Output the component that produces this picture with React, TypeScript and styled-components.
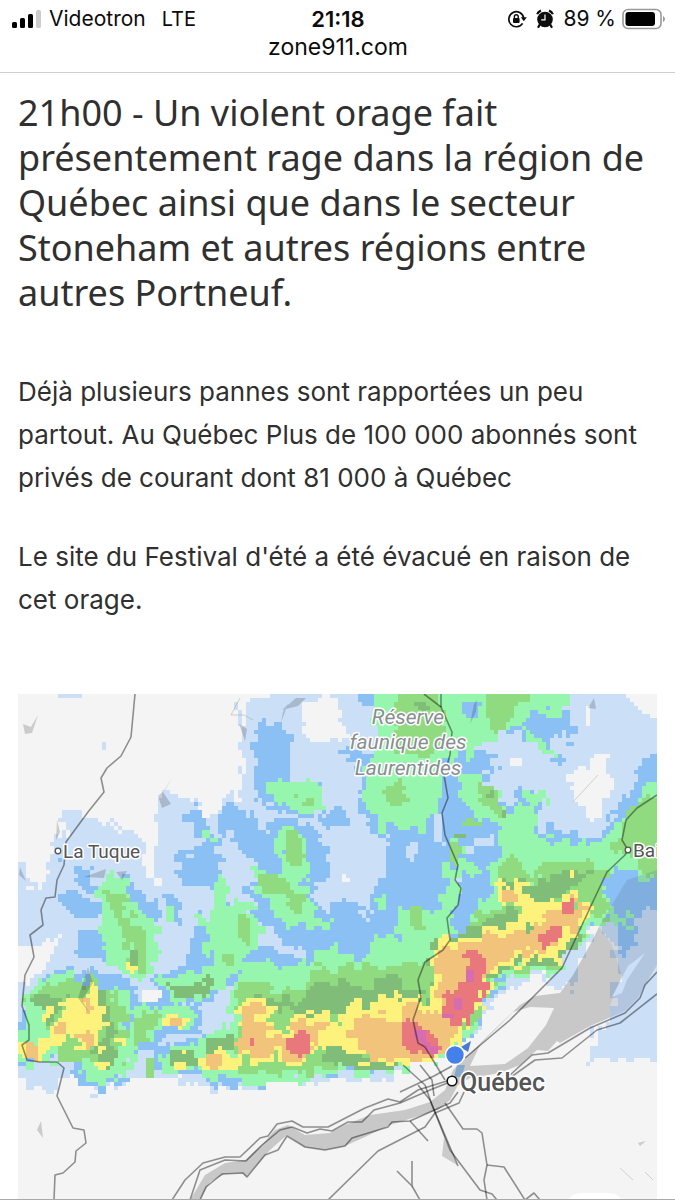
import React from "react";
import styled, { createGlobalStyle } from "styled-components";

const GlobalStyle = createGlobalStyle`
  *, *::before, *::after { box-sizing: border-box; }
  body { margin: 0; background: #fff; color: #303030; }
`;

const Page = styled.div`
  height: 100vh;
  display: flex;
  flex-direction: column;
  overflow: hidden;
  border-bottom: 1px solid #a9a9a9;
`;

const BrowserBar = styled.header`
  flex: none;
  padding: 6px 10px 9px 11px;
  border-bottom: 1px solid #cfcfcf;
  color: #0c0c0c;
  font-family: Inter, sans-serif;
`;

const StatusRow = styled.div`
  display: grid;
  grid-template-columns: 1fr auto 1fr;
  align-items: center;
  font-size: 21px;
  line-height: 26px;
`;

const StatusGroup = styled.div<{ $end?: boolean }>`
  display: flex;
  align-items: center;
  gap: ${(p) => (p.$end ? 6 : 8)}px;
  justify-content: ${(p) => (p.$end ? "flex-end" : "flex-start")};
  white-space: nowrap;
`;

const Network = styled.span`
  margin-left: 8px;
  font-size: 20px;
`;

const AlarmSlot = styled.span`
  display: flex;
  margin: 0 3px;
`;

const Clock = styled.time`
  font-size: 22px;
  font-weight: 600;
`;

const Address = styled.div`
  text-align: center;
  font-size: 23px;
  line-height: 31px;
`;

const Article = styled.main`
  flex: 1;
  min-height: 0;
  padding: 17px 18px 0;
`;

const Headline = styled.h1`
  margin: 0 0 55px;
  font: 400 36px/45px "Noto Sans", sans-serif;
`;

const Paragraph = styled.p`
  margin: 0 0 36px;
  font: 400 26px/43px Inter, sans-serif;
  white-space: nowrap;
`;

const MapFigure = styled.figure`
  margin: 73px 0 0;
  svg { display: block; width: 100%; height: auto; }
`;

const MapLabel = styled.text<{ $area?: boolean; $large?: boolean }>`
  font-family: Roboto, sans-serif;
  font-size: ${(p) => (p.$large ? 25 : p.$area ? 21 : 19)}px;
  font-style: ${(p) => (p.$area ? "italic" : "normal")};
  font-weight: ${(p) => (p.$large ? 500 : 400)};
  text-anchor: ${(p) => (p.$area ? "middle" : "start")};
  fill: ${(p) => (p.$area ? "#888e90" : "#555")};
  stroke: #fff;
  stroke-width: 3px;
  stroke-linejoin: round;
  paint-order: stroke;
`;

const SignalIcon = () => (
  <svg width="30" height="20" viewBox="0 0 30 20" aria-label="Signal">
    <rect x="1" y="13" width="5" height="6" rx="1.5" />
    <rect x="9" y="9" width="5" height="10" rx="1.5" />
    <rect x="17" y="5" width="5" height="14" rx="1.5" />
    <rect x="25" y="1" width="5" height="18" rx="1.5" fill="#cdcdcd" />
  </svg>
);

const RotationLockIcon = () => (
  <svg width="20" height="20" viewBox="0 0 20 20" fill="none" stroke="#0c0c0c" strokeWidth="1.7">
    <path d="M15.6 14.4a7.5 7.5 0 1 1 1.1-5.6" />
    <path d="M13.8 8.3h6l-3 4z" fill="#0c0c0c" stroke="none" />
    <rect x="6" y="9" width="6.6" height="5" rx="1" fill="#0c0c0c" stroke="none" />
    <path d="M7.4 9V7.6a1.9 1.9 0 0 1 3.8 0V9" strokeWidth="1.4" />
  </svg>
);

const AlarmIcon = () => (
  <svg width="18" height="20" viewBox="0 0 18 20">
    <circle cx="9" cy="10.5" r="7.8" fill="#0c0c0c" />
    <path d="M1.2 5.2 Q2 2.6 5 1.6M16.8 5.2Q16 2.6 13 1.6M3.8 15.5 2 18.7M14.2 15.5l1.8 3.2" fill="none" stroke="#0c0c0c" strokeWidth="2.2" />
    <path d="M9 5.5v5.3H5.2" fill="none" stroke="#fff" strokeWidth="1.2" />
  </svg>
);

const BatteryIcon = () => (
  <svg width="43" height="22" viewBox="0 0 43 22" aria-label="Batterie">
    <rect x="1" y="1.5" width="38" height="19" rx="5" fill="#fff" stroke="#999" strokeWidth="1.6" />
    <rect x="3.5" y="4" width="29.5" height="14" rx="3" fill="#000" />
    <path d="M41 8q2 1 2 3t-2 3z" fill="#999" />
  </svg>
);

type Point = [number, number];

const COLORS = {
  none: "#f4f4f4",
  light: "#cbdff7",
  blue: "#8bc0f4",
  green: "#97f6ae",
  leaf: "#90db80",
  moss: "#80bd78",
  yellow: "#fdf27c",
  orange: "#f2c47b",
  red: "#e8787c",
  pink: "#d76db0",
};
type Level = keyof typeof COLORS;

/* Rain intensity areas, weakest first; later areas cover earlier ones. */
const AREAS: [Level, string][] = [
  ["light", "18,865 35,890 50,872 52,850 64,835 65,815 98,812 120,822 135,838 142,848 145,872 150,883 160,883 157,850 158,800 165,793 180,800 195,808 213,820 218,803 238,795 243,780 240,694 657,694 657,1068 640,1062 610,1055 590,1062 595,1035 610,1008 622,975 612,945 598,925 585,950 573,985 560,995 545,985 548,972 530,978 505,990 490,1005 480,1020 470,1040 440,1058 410,1070 375,1082 320,1082 270,1083 240,1092 205,1088 170,1078 130,1078 108,1095 95,1092 75,1070 55,1092 18,1080"],
  ["light", "60,694 84,694 84,698 60,698"],
  ["light", "102,742 106,742 106,749 102,749"],
  ["none", "300,706 318,704 318,698 340,698 342,720 346,735 335,742 310,743 302,725"],
  ["none", "586,752 605,752 605,770 617,782 608,800 600,818 588,818 575,804 570,790 572,770 586,768"],
  ["none", "625,694 657,694 657,720 645,715"],
  ["none", "584,704 590,704 590,725 586,725"],
  ["none", "18,950 40,945 62,935 55,945 45,965 30,985 18,978"],
  ["none", "241,694 280,694 250,700 240,710"],
  ["none", "511,758 521,758 521,765 511,765"],
  ["none", "140,992 160,990 160,1005 142,1000"],
  ["none", "341,876 350,876 350,883 341,883"],
  ["none", "90,812 110,818 122,832 118,834 102,823"],
  ["blue", "262,722 285,722 289,740 286,760 290,778 312,778 326,800 320,815 300,815 265,806 255,790 253,765 256,745"],
  ["blue", "222,806 245,806 258,820 270,835 268,815 290,818 310,826 327,840 330,870 320,882 308,887 318,905 330,910 333,904 345,900 358,906 366,920 368,916 372,905 382,870 392,850 386,838 370,832 362,815 358,790 358,760 340,755 345,750 375,750 440,750 460,755 480,755 500,765 495,775 485,778 498,800 520,805 522,785 540,788 545,810 535,825 550,830 575,833 590,838 605,830 610,812 625,800 635,775 645,758 657,755 657,940 600,930 520,960 480,1010 470,1040 450,1055 410,1068 330,1078 240,1085 222,1088 200,1075 220,1060 230,1010 235,980 250,955 240,940 262,905 240,885 262,890 270,880 250,860 235,845 222,830"],
  ["blue", "318,818 330,812 345,808 350,824 330,828 318,822"],
  ["blue", "188,808 203,815 217,828 220,845 222,880 234,902 215,905 208,890 190,880 172,858 172,852 195,855 200,840 188,828"],
  ["blue", "222,806 238,804 240,828 222,826"],
  ["blue", "65,865 80,868 92,875 98,885 130,880 148,895 160,905 162,925 140,920 110,905 95,895 82,885"],
  ["blue", "60,895 75,893 100,903 102,918 88,918 72,915 62,905"],
  ["blue", "80,930 105,930 108,962 75,955"],
  ["blue", "160,893 180,895 182,925 165,925 168,905"],
  ["blue", "200,910 185,965 215,960 218,945"],
  ["blue", "45,972 70,968 115,978 132,988 140,1010 138,1050 125,1080 110,1092 85,1085 72,1068 78,1055 50,1062 18,1066 18,1030 26,1005"],
  ["blue", "152,975 190,962 225,955 250,965 245,1000 200,1005 165,1005"],
  ["blue", "125,1003 160,1000 200,1008 200,1030 165,1035 150,1050 130,1050"],
  ["blue", "155,1050 200,1035 240,1030 240,1092 200,1078 155,1070"],
  ["blue", "358,694 386,694 386,704 360,706"],
  ["light", "258,924 268,926 284,940 308,955 300,960 270,948 258,948"],
  ["light", "222,990 234,985 232,1010 210,1025 200,1018"],
  ["light", "405,845 418,840 415,862 406,858"],
  ["light", "435,815 442,815 444,845 434,840"],
  ["light", "314,1064 323,1068 322,1082 313,1085"],
  ["light", "463,848 490,838 492,847 468,852"],
  ["light", "453,880 462,878 462,891 453,892"],
  ["blue", "540,708 560,712 572,718 575,748 560,735 550,748 568,758 560,762 540,752 520,735 508,733 512,720"],
  ["green", "98,885 112,873 122,880 130,895 135,905 145,915 157,925 158,945 155,965 140,975 128,980 112,970 103,955 105,940 100,920 105,905 90,892"],
  ["green", "200,828 210,830 220,842 212,842 200,834"],
  ["green", "167,905 175,905 175,922 167,922"],
  ["green", "212,880 222,880 226,898 245,903 262,920 258,945 250,955 235,970 222,970 210,955 205,935 198,912 214,916"],
  ["green", "268,785 285,779 312,779 320,795 325,803 320,813 300,812 285,805 268,796"],
  ["green", "275,827 290,826 307,840 309,865 302,885 315,905 312,915 330,918 332,925 290,928 275,915 262,895 250,870 270,870 285,875 288,855 280,850 272,838"],
  ["green", "375,694 570,694 572,710 555,715 540,710 520,722 505,735 485,745 470,758 455,753 448,762 443,790 437,815 430,822 425,832 400,832 383,828 372,808 362,802 362,775 375,750 372,705"],
  ["green", "520,725 535,732 545,745 555,755 545,756 530,742"],
  ["green", "235,985 245,965 258,960 285,972 310,960 330,940 345,958 362,962 370,930 400,940 402,912 425,905 440,908 445,880 448,850 455,860 462,890 450,940 470,925 490,890 490,860 500,835 492,822 478,815 462,800 460,778 475,775 490,780 500,790 500,800 510,810 530,805 525,790 540,790 545,800 537,812 535,830 550,838 580,845 600,840 612,830 615,820 630,818 635,802 645,790 657,775 657,885 640,885 620,870 605,880 600,898 615,905 632,922 635,935 620,930 605,918 590,935 575,950 560,967 545,974 510,974 495,982 485,1000 478,1015 470,1035 455,1052 440,1060 405,1070 330,1074 300,1082 240,1082 215,1075 190,1072 160,1068 160,1055 190,1047 200,1035 225,1030"],
  ["green", "25,995 35,985 50,972 65,975 75,975 90,985 110,985 122,990 130,1005 133,1020 128,1030 140,1035 130,1075 110,1085 85,1080 80,1060 55,1060 40,1063 18,1063 18,1035 28,1030 30,1015"],
  ["green", "160,975 175,970 195,972 205,965 228,955 245,960 220,990 200,1002 175,1003 158,985"],
  ["green", "133,1010 145,1003 165,1010 190,1005 195,1020 185,1030 160,1028 150,1045 135,1048"],
  ["green", "376,898 388,895 388,912 378,910"],
  ["blue", "462,702 480,704 474,722 463,712"],
  ["blue", "455,785 462,800 470,815 492,825 498,840 492,870 478,900 468,925 450,935 448,915 460,902 460,890 470,870 454,850 448,830"],
  ["light", "463,848 478,840 490,838 492,846 468,852"],
  ["green", "448,835 458,838 466,850 456,866 450,850"],
  ["green", "462,858 472,862 478,875 468,878 460,867"],
  ["blue", "606,877 635,868 640,893 657,886 657,915 640,905 615,900"],
  ["light", "642,910 657,906 657,950 620,955 602,935 605,920 636,935 636,915"],
  ["blue", "618,928 635,930 637,945 625,955 618,940"],
  ["leaf", "106,890 115,890 122,905 133,920 142,935 140,945 143,965 135,972 120,968 128,955 125,940 115,920 108,905"],
  ["leaf", "238,913 248,915 250,945 240,943"],
  ["leaf", "222,955 232,955 234,966 225,968"],
  ["leaf", "296,792 300,792 300,799 296,799"],
  ["leaf", "303,802 312,798 314,804 304,806"],
  ["leaf", "283,832 298,832 303,850 302,865 292,868 285,845"],
  ["leaf", "256,878 275,872 290,888 303,900 303,915 293,915 285,898 265,893"],
  ["leaf", "397,694 440,694 440,705 447,720 440,745 425,760 400,755 393,735 397,720"],
  ["leaf", "485,694 520,694 535,702 520,705 508,720 505,733 490,728 485,710"],
  ["leaf", "383,790 400,780 403,795 411,803 400,806 385,795"],
  ["leaf", "475,783 495,785 498,800 507,810 505,820 492,812 480,798"],
  ["leaf", "465,820 483,820 480,827 463,825"],
  ["leaf", "448,840 462,845 458,865 448,858"],
  ["leaf", "622,822 640,800 657,795 657,880 640,875 635,860 615,850 604,845 622,838"],
  ["leaf", "530,868 560,862 580,860 605,865 610,870 598,898 612,912 598,920 575,895 540,882"],
  ["leaf", "498,870 505,855 518,853 522,870 530,882 510,890 496,885"],
  ["leaf", "411,907 422,905 424,930 412,930"],
  ["leaf", "238,985 260,980 278,994 295,990 315,965 330,968 360,968 375,965 400,970 430,960 435,945 460,940 480,915 500,905 540,890 590,900 594,918 575,945 555,968 510,970 492,980 480,1012 455,1048 405,1065 330,1068 300,1077 270,1068 240,1070 234,1050"],
  ["leaf", "28,995 50,980 75,980 110,985 115,1000 125,1015 125,1045 118,1065 60,1058 55,1035 45,1020 42,1005"],
  ["leaf", "145,1060 155,1058 155,1078 147,1078"],
  ["leaf", "133,1020 143,1012 160,1010 145,1045 134,1045"],
  ["moss", "485,792 493,792 493,797 485,797"],
  ["moss", "501,810 505,810 505,816 501,816"],
  ["moss", "453,832 465,832 465,837 453,837"],
  ["moss", "410,704 425,703 435,712 425,712 410,706"],
  ["moss", "28,995 45,992 60,1000 75,990 60,1008 48,1025 42,1008"],
  ["moss", "85,985 105,988 115,1030 112,1050 122,1058 105,1070 92,1052 105,1040 98,1000"],
  ["moss", "165,983 200,985 210,975 215,985 200,997 178,1000"],
  ["moss", "168,1052 195,1050 197,1068 172,1066"],
  ["moss", "205,1040 235,1035 235,1050 205,1054"],
  ["moss", "128,950 138,950 137,965 128,965"],
  ["moss", "258,992 280,998 300,1002 318,985 340,978 355,990 372,990 380,972 392,975 400,985 425,990 420,1002 350,1010 335,1018 310,1012 290,1008 275,1006 260,1002"],
  ["moss", "325,1045 345,1050 370,1064 400,1064 390,1070 345,1068 325,1060"],
  ["moss", "430,942 460,932 485,925 500,910 515,912 520,922 480,935 440,948 435,1000 430,1005"],
  ["moss", "495,880 510,878 530,886 560,872 590,872 575,885 560,895 540,903 520,895"],
  ["moss", "560,942 585,928 578,942 562,962 510,968 485,985 480,975 510,960"],
  ["yellow", "125,965 130,962 137,968 130,974 124,972"],
  ["yellow", "60,1008 75,1000 85,990 95,988 105,1000 108,1025 95,1030 100,1045 90,1052 80,1045 65,1035 50,1050 42,1050 42,1040 55,1028"],
  ["yellow", "42,1006 50,1004 50,1014 46,1018 42,1015"],
  ["yellow", "18,1044 35,1041 38,1060 28,1060 18,1052"],
  ["yellow", "115,1037 124,1037 124,1044 115,1044"],
  ["yellow", "93,1063 108,1063 108,1068 93,1068"],
  ["yellow", "162,1020 175,1015 187,1018 183,1028 163,1028"],
  ["yellow", "175,1062 185,1062 185,1070 175,1070"],
  ["yellow", "181,1051 188,1051 188,1056 181,1056"],
  ["yellow", "198,1060 215,1048 230,1058 243,1054 243,1064 220,1072 198,1068"],
  ["yellow", "568,870 575,872 576,878 570,880"],
  ["yellow", "240,1035 236,1020 240,1010 255,997 262,1000 282,1003 278,1015 272,1025 282,1035 290,1025 305,1013 325,1012 330,1025 335,1025 336,1017 345,1010 345,1005 375,1005 382,992 395,992 397,1000 420,996 430,1005 433,980 435,955 442,940 465,937 490,932 500,925 515,922 520,908 495,895 495,880 505,882 525,890 540,903 560,895 575,892 588,912 590,922 575,935 560,940 560,960 540,955 520,963 500,970 488,980 484,1005 468,1018 462,1045 445,1055 430,1063 400,1062 370,1062 350,1055 335,1043 325,1045 310,1055 298,1070 285,1070 275,1055 250,1060 235,1055"],
  ["orange", "55,1025 66,1022 66,1035 55,1036"],
  ["orange", "76,1036 90,1030 97,1042 90,1050"],
  ["orange", "82,998 90,996 92,1008 88,1014"],
  ["orange", "24,1043 37,1045 36,1060 26,1058"],
  ["orange", "170,1019 182,1018 180,1026 170,1025"],
  ["orange", "206,1055 220,1054 220,1068 208,1068"],
  ["orange", "240,1025 252,1004 260,1004 262,1030 282,1042 300,1022 325,1022 315,1045 298,1065 285,1062 280,1048 255,1055 235,1052"],
  ["orange", "347,1022 380,1015 400,1018 405,1004 440,1010 438,965 445,950 465,942 500,935 525,930 540,920 560,900 575,898 585,915 575,930 558,930 550,950 520,955 500,962 486,977 480,1000 465,1015 458,1038 445,1052 415,1060 370,1058 355,1045"],
  ["orange", "500,888 515,890 520,900 503,902"],
  ["moss", "526,923 532,920 532,932 526,932"],
  ["red", "287,1040 300,1031 312,1038 310,1050 298,1058 287,1050"],
  ["red", "248,1038 253,1038 253,1047 248,1047"],
  ["red", "403,1020 415,1020 430,1030 440,1048 435,1060 420,1050 403,1052"],
  ["red", "470,950 482,952 484,975 482,1005 470,1010 462,1032 452,1028 438,1020 445,1005 445,990 468,980"],
  ["red", "540,935 560,922 558,935 548,950 540,948"],
  ["red", "562,905 573,899 575,912 563,916"],
  ["pink", "414,1030 425,1032 432,1045 440,1050 434,1056 418,1040"],
  ["pink", "466,972 476,972 474,983 466,982"],
  ["pink", "456,996 462,998 460,1012 454,1010"],
  ["pink", "442,1014 453,1014 453,1020 442,1020"],
];

const LEFT = 18;
const TOP = 694;
const CELL = 4;
const COLS = 160;
const ROWS = 127;

const parse = (s: string): Point[] => s.split(" ").map((p) => p.split(",").map(Number) as Point);

const inside = (x: number, y: number, pts: Point[]) => {
  let hit = false;
  for (let i = 0, j = pts.length - 1; i < pts.length; j = i++) {
    const [xi, yi] = pts[i];
    const [xj, yj] = pts[j];
    if (yi > y !== yj > y && x < ((xj - xi) * (y - yi)) / (yj - yi) + xi) hit = !hit;
  }
  return hit;
};

const noise = (a: number, b: number) => {
  const n = Math.sin(a * 127.1 + b * 311.7) * 43758.5453;
  return n - Math.floor(n) - 0.5;
};

/* Samples the areas on the radar grid and joins equal neighbours into runs. */
const buildRadar = () => {
  const shapes = AREAS.map(([level, s]) => {
    const pts = parse(s);
    const ys = pts.map((p) => p[1]);
    return { level, pts, min: Math.min(...ys) - 8, max: Math.max(...ys) + 8, wobble: pts.length > 9 ? 12 : pts.length > 4 ? 6 : 1 };
  });
  const paths: Partial<Record<Level, string>> = {};
  for (let r = 0; r < ROWS; r++) {
    const y = TOP + r * CELL;
    const rowShapes = shapes.filter((s) => y + CELL >= s.min && y <= s.max);
    let start = 0;
    let current: Level = "none";
    for (let c = 0; c <= COLS; c++) {
      const x = LEFT + c * CELL;
      let level: Level = "none";
      if (c < COLS) {
        const dx = noise(c >> 2, r >> 1);
        const dy = noise((r >> 2) + 50, c >> 1);
        for (const s of rowShapes) {
          const px = Math.min(656, Math.max(19, x + 2 + dx * s.wobble));
          const py = Math.max(695, y + 2 + dy * s.wobble);
          if (inside(px, py, s.pts)) level = s.level;
        }
      }
      if (level !== current || c === COLS) {
        if (current !== "none") {
          const w = (c - start) * CELL;
          paths[current] = (paths[current] ?? "") + `M${LEFT + start * CELL} ${y}h${w}v${CELL}h${-w}z`;
        }
        start = c;
        current = level;
      }
    }
  }
  return paths;
};

const RADAR = buildRadar();

const ROADS = [
  "135,694 131,737 121,756 107,768 101,778 104,792 88,812 66,842 64,865 57,880 55,897 46,898 41,910 43,925 30,935 34,957 25,975 22,1006 29,1025 29,1040 22,1045 27,1060 40,1062 57,1062 64,1068 57,1096 73,1128 84,1130 86,1143 76,1151 75,1162 63,1173 55,1175 54,1200",
  "424,694 441,707 452,732 450,755 444,775 448,798 442,813 445,835 458,865 455,880 461,888 458,905 447,918 450,940 443,950 425,962 418,980 421,997 413,1020 418,1043 425,1047 445,1080",
  "441,694 441,707",
  "657,795 637,808 626,820 622,840 628,850 625,855 607,872 597,893 575,940 562,968 545,985 510,1020 465,1058",
  "172,1200 185,1180 203,1163 225,1157 240,1157 260,1138 268,1136 277,1124 292,1121 303,1127 328,1127 365,1108 388,1099 400,1102 418,1090 450,1080",
  "190,1200 200,1170 225,1160 246,1161 262,1145 280,1130 292,1127 307,1133 320,1129 332,1131 348,1122 362,1122 374,1110 400,1103 430,1090 450,1082",
  "200,1200 206,1187 222,1174 243,1173 247,1177 265,1155 278,1150 287,1136 305,1147 325,1150 345,1146 352,1138 388,1127 392,1122 410,1121 450,1103 458,1092",
  "328,1200 378,1151 425,1127 435,1113 459,1103 464,1092",
  "397,1171 412,1186 412,1161",
  "412,1186 420,1200",
  "410,1121 428,1141",
  "403,1065 425,1085 432,1105 450,1150 480,1190 492,1194 497,1200",
  "420,1065 432,1080 434,1096",
  "418,1085 430,1100 458,1166",
  "445,1103 463,1129 477,1129 482,1133 487,1165 484,1180 487,1200",
  "487,1165 504,1167 525,1200 534,1193 540,1200",
  "657,972 645,985 640,998 625,1013 590,1028 548,1053 532,1055 510,1075",
  "657,994 620,1023 597,1030 562,1058 535,1060 500,1085",
  "452,1066 434,1076 400,1092",
];

const RIVER =
  "M453 1070 500 1024 520 1005 535 996 560 993 573 975 590 945 600 925 615 900 627 880 657 870V965L645 985 638 998 625 1011 590 1026 560 1043 557 1041 548 1051 537 1050 520 1065 500 1073 470 1078 458 1085 450 1100 438 1110 390 1125 365 1137 345 1146 325 1150 305 1147 287 1135 270 1150 246 1177 242 1173 225 1174 210 1182 200 1200H190L205 1175 225 1163 245 1160 262 1145 275 1130 288 1125 305 1135 330 1133 345 1125 370 1115 405 1110 430 1102 445 1090Z" +
  "M470 1066 505 1064 528 1048 546 1025 554 1008 530 1007 513 1012 480 1045Z" +
  "M612 997 622 993 627 980 645 953 628 966Z";

const LAKES =
  "M23 724 31 727 38 715 32 733 25 734ZM57 820 60 832 56 840ZM158 796 165 790 172 778 163 792 171 804 162 808ZM84 877 106 869 104 878ZM116 872 127 871 122 880ZM282 710 296 698 306 698 298 706ZM288 703 281 723 283 712ZM239 724 247 729 245 741ZM588 708 594 698 596 709ZM474 704 477 700 476 712 470 724ZM88 967 93 983 82 1000 90 1014 78 998ZM37 1130 41 1121 43 1138ZM20 867 26 881 19 875ZM444 1138 457 1165 442 1156ZM638 1143 646 1141 640 1146Z";

const StormMap = () => (
  <svg viewBox="18 694 639 506" role="img" aria-label="Carte radar des orages">
    <defs>
      <clipPath id="dry-river">
        <path d="M18 694H598V925L612 945 622 975 610 1006V1200H18Z" />
      </clipPath>
      <clipPath id="wet-river">
        <path d="M598 694H657V1200H610V1006L622 975 612 945 598 925Z" />
      </clipPath>
    </defs>
    <rect x="18" y="694" width="639" height="506" fill={COLORS.none} />
    <g shapeRendering="crispEdges">
      {(Object.keys(RADAR) as Level[]).map((level) => (
        <path key={level} d={RADAR[level]} fill={COLORS[level]} />
      ))}
    </g>
    <path d={RIVER} fillRule="evenodd" fill="#000" fillOpacity="0.18" clipPath="url(#dry-river)" />
    <path d={RIVER} fillRule="evenodd" fill="#5a6e93" fillOpacity="0.22" clipPath="url(#wet-river)" />
    <path d={LAKES} fill="#000" fillOpacity="0.17" />
    <path d="M231 715 240 698M231 715 244 715 253 720M573 802 598 775M620 1168 633 1180M645 1172 653 1180" fill="none" stroke="#999" strokeOpacity="0.4" />
    {ROADS.map((road) => (
      <polyline key={road} points={road} fill="none" stroke="#000" strokeOpacity="0.42" strokeWidth="1.6" strokeLinejoin="round" />
    ))}
    <path d="M457 1065h8l-3 12h-8z" fill="#5b93cf" fillOpacity="0.6" />
    <path d="M461 1047 471 1041 468 1052Z" fill="#4678d4" />
    <circle cx="455" cy="1055" r="9.5" fill="#4480ec" stroke="#fff" strokeWidth="1.6" />
    <circle cx="452" cy="1081" r="4.8" fill="#fff" stroke="#111" strokeWidth="1.6" />
    <circle cx="58" cy="851" r="2.8" fill="#fff" stroke="#555" strokeWidth="1.3" />
    <circle cx="628" cy="850" r="2.8" fill="#fff" stroke="#555" strokeWidth="1.3" />
    <MapLabel x="63" y="858">La Tuque</MapLabel>
    <MapLabel x="633" y="857">Bai</MapLabel>
    <MapLabel x="460" y="1091" $large>Québec</MapLabel>
    <MapLabel x="408" y="724" $area>Réserve</MapLabel>
    <MapLabel x="408" y="749" $area>faunique des</MapLabel>
    <MapLabel x="408" y="775" $area>Laurentides</MapLabel>
    <path d="M568 1200q4-7 13-7h28q9 0 13 7z" fill="#fff" />
  </svg>
);

export default function App() {
  return (
    <Page>
      <GlobalStyle />
      <BrowserBar>
        <StatusRow>
          <StatusGroup>
            <SignalIcon />
            <span>Videotron</span>
            <Network>LTE</Network>
          </StatusGroup>
          <Clock>21:18</Clock>
          <StatusGroup $end>
            <RotationLockIcon />
            <AlarmSlot>
              <AlarmIcon />
            </AlarmSlot>
            <span>89 %</span>
            <BatteryIcon />
          </StatusGroup>
        </StatusRow>
        <Address>zone911.com</Address>
      </BrowserBar>
      <Article>
        <Headline>
          21h00 - Un violent orage fait
          <br />
          présentement rage dans la région de
          <br />
          Québec ainsi que dans le secteur
          <br />
          Stoneham et autres régions entre
          <br />
          autres Portneuf.
        </Headline>
        <Paragraph>
          Déjà plusieurs pannes sont rapportées un peu
          <br />
          partout. Au Québec Plus de 100 000 abonnés sont
          <br />
          privés de courant dont 81 000 à Québec
        </Paragraph>
        <Paragraph>
          Le site du Festival d'été a été évacué en raison de
          <br />
          cet orage.
        </Paragraph>
        <MapFigure>
          <StormMap />
        </MapFigure>
      </Article>
    </Page>
  );
}
